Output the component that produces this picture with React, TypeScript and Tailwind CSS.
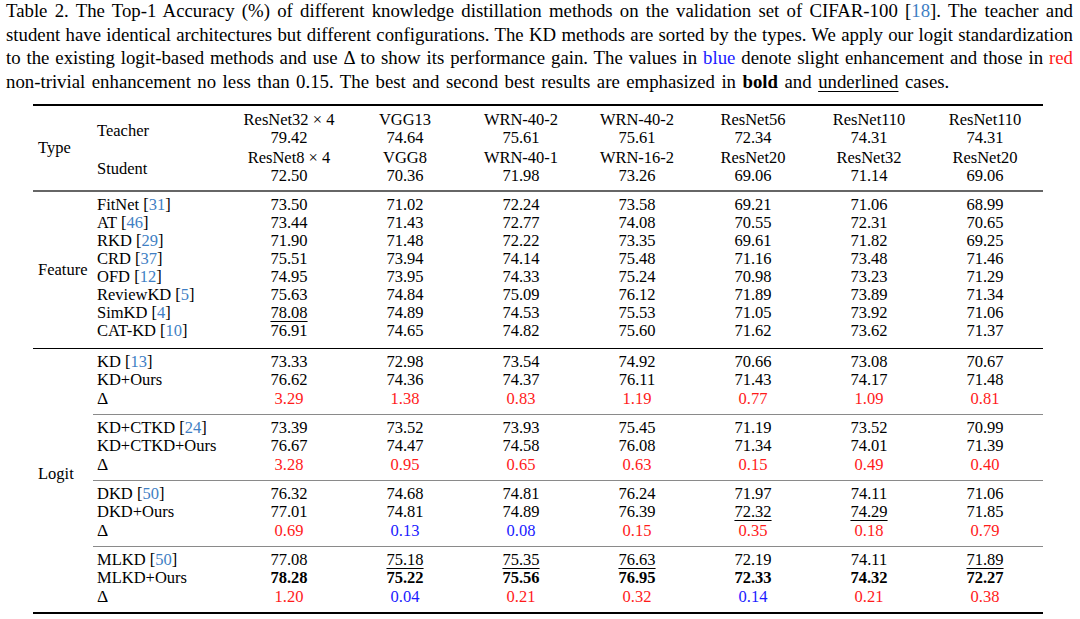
import React from "react";

type Cell = { v: string; c?: "r" | "b"; u?: boolean; bold?: boolean };

const parse = (s: string): Cell => {
  let v = s;
  const cell: Cell = { v };
  if (v.startsWith("*")) { cell.bold = true; v = v.slice(1); }
  if (v.startsWith("_")) { cell.u = true; v = v.slice(1); }
  if (v.startsWith("r:")) { cell.c = "r"; v = v.slice(2); }
  if (v.startsWith("b:")) { cell.c = "b"; v = v.slice(2); }
  cell.v = v;
  return cell;
};

type Row = { name: string; cite?: string; vals: string[] };

const feature: Row[] = [
  { name: "FitNet", cite: "31", vals: ["73.50", "71.02", "72.24", "73.58", "69.21", "71.06", "68.99"] },
  { name: "AT", cite: "46", vals: ["73.44", "71.43", "72.77", "74.08", "70.55", "72.31", "70.65"] },
  { name: "RKD", cite: "29", vals: ["71.90", "71.48", "72.22", "73.35", "69.61", "71.82", "69.25"] },
  { name: "CRD", cite: "37", vals: ["75.51", "73.94", "74.14", "75.48", "71.16", "73.48", "71.46"] },
  { name: "OFD", cite: "12", vals: ["74.95", "73.95", "74.33", "75.24", "70.98", "73.23", "71.29"] },
  { name: "ReviewKD", cite: "5", vals: ["75.63", "74.84", "75.09", "76.12", "71.89", "73.89", "71.34"] },
  { name: "SimKD", cite: "4", vals: ["_78.08", "74.89", "74.53", "75.53", "71.05", "73.92", "71.06"] },
  { name: "CAT-KD", cite: "10", vals: ["76.91", "74.65", "74.82", "75.60", "71.62", "73.62", "71.37"] },
];

const logit: Row[][] = [
  [
    { name: "KD", cite: "13", vals: ["73.33", "72.98", "73.54", "74.92", "70.66", "73.08", "70.67"] },
    { name: "KD+Ours", vals: ["76.62", "74.36", "74.37", "76.11", "71.43", "74.17", "71.48"] },
    { name: "Δ", vals: ["r:3.29", "r:1.38", "r:0.83", "r:1.19", "r:0.77", "r:1.09", "r:0.81"] },
  ],
  [
    { name: "KD+CTKD", cite: "24", vals: ["73.39", "73.52", "73.93", "75.45", "71.19", "73.52", "70.99"] },
    { name: "KD+CTKD+Ours", vals: ["76.67", "74.47", "74.58", "76.08", "71.34", "74.01", "71.39"] },
    { name: "Δ", vals: ["r:3.28", "r:0.95", "r:0.65", "r:0.63", "r:0.15", "r:0.49", "r:0.40"] },
  ],
  [
    { name: "DKD", cite: "50", vals: ["76.32", "74.68", "74.81", "76.24", "71.97", "74.11", "71.06"] },
    { name: "DKD+Ours", vals: ["77.01", "74.81", "74.89", "76.39", "_72.32", "_74.29", "71.85"] },
    { name: "Δ", vals: ["r:0.69", "b:0.13", "b:0.08", "r:0.15", "r:0.35", "r:0.18", "r:0.79"] },
  ],
  [
    { name: "MLKD", cite: "50", vals: ["77.08", "_75.18", "_75.35", "_76.63", "72.19", "74.11", "_71.89"] },
    { name: "MLKD+Ours", vals: ["*78.28", "*75.22", "*75.56", "*76.95", "*72.33", "*74.32", "*72.27"] },
    { name: "Δ", vals: ["r:1.20", "b:0.04", "r:0.21", "r:0.32", "b:0.14", "r:0.21", "r:0.38"] },
  ],
];

const teachers = [
  ["ResNet32\u2005×\u20054", "79.42"], ["VGG13", "74.64"], ["WRN-40-2", "75.61"], ["WRN-40-2", "75.61"],
  ["ResNet56", "72.34"], ["ResNet110", "74.31"], ["ResNet110", "74.31"],
];
const students = [
  ["ResNet8\u2005×\u20054", "72.50"], ["VGG8", "70.36"], ["WRN-40-1", "71.98"], ["WRN-16-2", "73.26"],
  ["ResNet20", "69.06"], ["ResNet32", "71.14"], ["ResNet20", "69.06"],
];

const Val = ({ s }: { s: string }) => {
  const c = parse(s);
  const color = c.c === "r" ? "text-[#ff1a1a]" : c.c === "b" ? "text-[#1a1aff]" : "text-black";
  return (
    <div className={`w-[116px] text-center ${color}`}>
      <span className={`${c.bold ? "font-bold" : ""} ${c.u ? "underline decoration-1 underline-offset-[3px]" : ""}`}>{c.v}</span>
    </div>
  );
};

const DataRow = ({ r, h = "h-[18px]" }: { r: Row; h?: string }) => (
  <div className={`flex items-center ${h}`}>
    <div className="w-[138px] pl-[4px] whitespace-nowrap">
      {r.name === "Δ" ? <span className="text-[17.5px]">Δ</span> : r.name}
      {r.cite && (
        <>
          {" "}
          [<span className="text-[#3f7fc4]">{r.cite}</span>]
        </>
      )}
    </div>
    {r.vals.map((v, i) => (
      <Val key={i} s={v} />
    ))}
  </div>
);

const J = "block text-justify [text-align-last:justify] whitespace-nowrap";

export default function App() {
  return (
    <div className="w-[1080px] h-[619px] bg-white text-black overflow-hidden" style={{ fontFamily: '"Liberation Serif", "Times New Roman", serif' }}>
      <div className="pl-[6px] pr-[7px] text-[18.8px] leading-[23.6px] mt-[-1px]">
        <span className={J}>
          Table 2. The Top-1 Accuracy (%) of different knowledge distillation methods on the validation set of CIFAR-100 [
          <span className="text-[#3f7fc4]">18</span>]. The teacher and
        </span>
        <span className={J}>
          student have identical architectures but different configurations. The KD methods are sorted by the types. We apply our logit standardization
        </span>
        <span className={J}>
          to the existing logit-based methods and use Δ to show its performance gain. The values in{" "}
          <span className="text-[#1a1aff]">blue</span> denote slight enhancement and those in <span className="text-[#ff1a1a]">red</span>
        </span>
        <span className="block whitespace-nowrap [word-spacing:1.8px]">
          non-trivial enhancement no less than 0.15. The best and second best results are emphasized in{" "}
          <span className="font-bold">bold</span> and{" "}
          <span className="underline decoration-1 underline-offset-[3px]">underlined</span> cases.
        </span>
      </div>

      <div className="ml-[33px] w-[1010px] mt-[11px] text-[16.5px] leading-[18px]">
        {/* header */}
        <div className="flex border-t-2 border-black border-b-2 border-b-[#666]">
          <div className="w-[60px] pl-[5px] flex items-center">Type</div>
          <div className="flex flex-col pt-[5px] pb-[5px] gap-[2px]">
            {[
              ["Teacher", teachers],
              ["Student", students],
            ].map(([label, list]) => (
              <div key={label as string} className="flex items-center">
                <div className="w-[138px] pl-[4px] pt-[3px]">{label as string}</div>
                {(list as string[][]).map((t, i) => (
                  <div key={i} className="w-[116px] text-center">
                    <div className="h-[18px] whitespace-nowrap">{t[0]}</div>
                    <div className="h-[18px]">{t[1]}</div>
                  </div>
                ))}
              </div>
            ))}
          </div>
        </div>

        {/* feature */}
        <div className="flex border-b border-black">
          <div className="w-[60px] pl-[5px] flex items-center">Feature</div>
          <div className="flex flex-col pt-[4px] pb-[8px]">
            {feature.map((r, i) => (
              <DataRow key={i} r={r} />
            ))}
          </div>
        </div>

        {/* logit */}
        <div className="flex border-b-2 border-black">
          <div className="w-[60px] pl-[5px] flex items-center pb-[13px]">Logit</div>
          <div className="flex flex-col">
            {logit.map((g, gi) => (
              <div key={gi} className={`pt-[3px] pb-[6.5px] ${gi > 0 ? "border-t-[1.5px] border-[#8a8a8a]" : ""}`}>
                {g.map((r, i) => (
                  <DataRow key={i} r={r} h="h-[18.5px]" />
                ))}
              </div>
            ))}
          </div>
        </div>
      </div>
    </div>
  );
}
